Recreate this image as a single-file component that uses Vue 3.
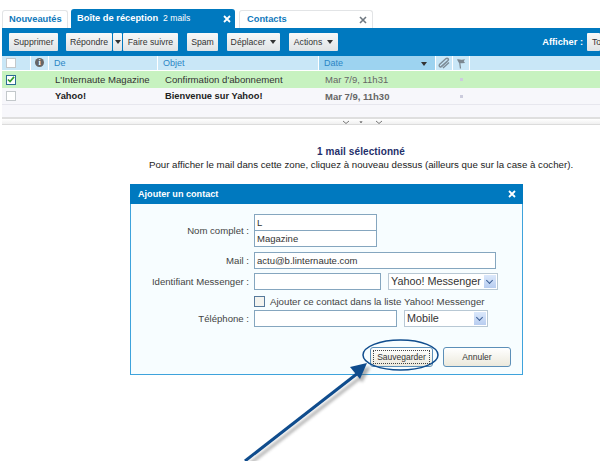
<script setup>
const rows = [
  { from: "L'Internaute Magazine", subject: "Confirmation d'abonnement", date: 'Mar 7/9, 11h31', selected: true },
  { from: 'Yahoo!', subject: 'Bienvenue sur Yahoo!', date: 'Mar 7/9, 11h30', selected: false }
]
</script>

<template>
  <div class="page">
    <nav class="tabs">
      <div class="tab t-news">Nouveautés</div>
      <div class="tab active t-inbox">
        <span class="tab-title">Boîte de réception</span>
        <span class="tab-count">2 mails</span>
        <svg class="tab-x" width="8" height="8" viewBox="0 0 8 8"><path d="M1 1l6 6M7 1l-6 6" stroke="#fff" stroke-width="1.8"/></svg>
      </div>
      <div class="tab t-contacts">
        <span class="tab-title">Contacts</span>
        <svg class="tab-close" width="8" height="8" viewBox="0 0 8 8"><path d="M1 1l6 6M7 1l-6 6" stroke="#6f7880" stroke-width="1.6"/></svg>
      </div>
    </nav>

    <div class="toolbar">
      <button class="btn w-sup">Supprimer</button>
      <div class="split">
        <button class="btn w-rep">Répondre</button>
        <button class="btn w-arrow"><i class="caret"></i></button>
        <button class="btn w-fwd">Faire suivre</button>
      </div>
      <button class="btn w-spam">Spam</button>
      <button class="btn w-dep">Déplacer<i class="caret"></i></button>
      <button class="btn w-act">Actions<i class="caret"></i></button>
      <div class="show">
        <b>Afficher :</b>
        <span class="btn show-btn">To</span>
      </div>
    </div>

    <div class="list-head">
      <div class="h c-check"><span class="box"></span></div>
      <div class="h c-info"><i class="info">i</i></div>
      <div class="h c-from">De</div>
      <div class="h c-subj">Objet</div>
      <div class="h c-date sorted">Date<i class="caret dark"></i></div>
      <div class="h c-clip">
        <svg width="12" height="12" viewBox="0 0 12 12"><path d="M2 10.500L10 3.500C11.200 2 9.500.6 8 1.600L1.500 7.500C.6 9 2 10.600 3.500 9.600L9.500 4.200M5 11l6-5.500" fill="none" stroke="#7d8c97" stroke-width="1.400"/></svg>
      </div>
      <div class="h c-flag">
        <svg width="10" height="11" viewBox="0 0 10 11"><path d="M4.500 10.500L3.500 3" fill="none" stroke="#7b8790" stroke-width="1.200"/><path d="M1 1.500c2-.8 3 .5 5 .2l3-.4-1.200 2L9 5l-3 .3c-1.200.1-2-.4-3-.2z" fill="#7b8790"/></svg>
      </div>
      <div class="h c-rest"></div>
    </div>

    <div v-for="r in rows" :key="r.date" class="row" :class="{ selected: r.selected }">
      <div class="c-check">
        <span class="box" :class="{ on: r.selected }">
          <svg v-if="r.selected" width="8" height="7" viewBox="0 0 9 8"><path d="M1 4l2.400 2.400L8 1" fill="none" stroke="#2e9a2a" stroke-width="1.800"/></svg>
        </span>
      </div>
      <div class="c-info"></div>
      <div class="c-from cell">{{ r.from }}</div>
      <div class="c-subj cell">{{ r.subject }}</div>
      <div class="c-date cell date">{{ r.date }}</div>
      <div class="c-clip"></div>
      <div class="c-flag"><i class="dot"></i></div>
    </div>
    <div class="row-empty"></div>

    <div class="splitter">
      <svg class="grip" width="40" height="5" viewBox="0 0 40 5">
        <path d="M1 1l3 2.500 3-2.500M18 1l1 2 1-2M34 1l3 2.500 3-2.500" fill="none" stroke="#777" stroke-width="1"/>
      </svg>
    </div>

    <section class="selection">
      <h2>1 mail sélectionné</h2>
      <p>Pour afficher le mail dans cette zone, cliquez à nouveau dessus (ailleurs que sur la case à cocher).</p>
    </section>

    <div class="modal">
      <header class="modal-head">
        <span>Ajouter un contact</span>
        <svg width="8" height="8" viewBox="0 0 8 8"><path d="M1 1l6 6M7 1l-6 6" stroke="#fff" stroke-width="1.800"/></svg>
      </header>
      <div class="form">
        <div class="f-row f-name">
          <label>Nom complet :</label>
          <div class="stack">
            <span class="input w123">L</span>
            <span class="input w123 joined">Magazine</span>
          </div>
        </div>
        <div class="f-row">
          <label>Mail :</label>
          <span class="input w242">actu@b.linternaute.com</span>
        </div>
        <div class="f-row">
          <label>Identifiant Messenger :</label>
          <span class="input w127"></span>
          <span class="select w110">Yahoo! Messenger<i class="sel-arrow"></i></span>
        </div>
        <div class="f-row f-check">
          <label></label>
          <span class="check"></span>
          <span class="check-text">Ajouter ce contact dans la liste Yahoo! Messenger</span>
        </div>
        <div class="f-row">
          <label>Téléphone :</label>
          <span class="input w143"></span>
          <span class="select w84">Mobile<i class="sel-arrow"></i></span>
        </div>
      </div>
      <div class="modal-actions">
        <button class="mbtn save"><span>Sauvegarder</span></button>
        <button class="mbtn cancel">Annuler</button>
      </div>
    </div>

    <svg class="annot" width="600" height="461" viewBox="0 0 600 461">
      <defs>
        <filter id="sh" x="-20%" y="-20%" width="140%" height="140%">
          <feGaussianBlur stdDeviation="1.600"/>
        </filter>
      </defs>
      <g opacity=".45" fill="#555" stroke="#555" filter="url(#sh)" transform="translate(3 4)">
        <path d="M245 461L358 373" stroke-width="3" fill="none"/>
        <path d="M367 363L352 367L359 378Z"/>
      </g>
      <ellipse cx="400.500" cy="355" rx="37.500" ry="15" fill="none" stroke="#0f4c8d" stroke-width="1.500"/>
      <path d="M245 461L358 373" stroke="#0f4c8d" stroke-width="3" fill="none"/>
      <path d="M367 363L350 367L360 379Z" fill="#0f4c8d"/>
    </svg>
  </div>
</template>

<style>
html, body { margin: 0; background: #fff; }
</style>

<style scoped>
.page {
  position: relative;
  width: 600px;
  height: 461px;
  overflow: hidden;
  background: #fff;
  font-family: "Liberation Sans", Arial, sans-serif;
  font-size: 9.600px;
  color: #333;
}
.tabs {
  display: flex;
  align-items: flex-end;
  height: 19px;
  padding: 9px 0 0 2px;
}
.tab {
  box-sizing: border-box;
  height: 18px;
  margin-right: 3px;
  border: 1px solid #e2e4e6;
  border-bottom: 0;
  border-radius: 3px 3px 0 0;
  background: #fff;
  color: #1078bb;
  font-weight: bold;
  font-size: 9.300px;
  line-height: 17px;
}
.t-news { width: 66px; padding-left: 6px; }
.t-inbox {
  display: flex;
  align-items: center;
  width: 164px;
  height: 19px;
  padding-left: 6px;
  border: 0;
  background: #0079bf;
  color: #fff;
}
.tab-count { margin-left: 5px; font-weight: normal; font-size: 8.600px; }
.tab-x { margin-left: auto; margin-right: 4px; }
.t-contacts {
  display: flex;
  align-items: center;
  justify-content: space-between;
  width: 134px;
  margin-left: 1px;
  padding: 0 5px 0 7px;
}
.toolbar {
  display: flex;
  align-items: center;
  box-sizing: border-box;
  height: 28px;
  margin-left: 2px;
  padding: 0 0 0 7px;
  background: #0079bf;
}
.btn {
  box-sizing: border-box;
  height: 18px;
  margin: 0;
  padding: 0;
  border: 0;
  border-radius: 1px;
  background: linear-gradient(#f8f9f9, #dfe3e5);
  color: #333;
  font: 8.700px/18px "Liberation Sans", Arial, sans-serif;
  text-align: center;
}
.w-sup { width: 49px; }
.split { display: flex; margin-left: 8px; gap: 1px; }
.w-rep { width: 46px; }
.w-arrow { width: 9px; }
.w-fwd { width: 55px; }
.w-spam { width: 31px; margin-left: 9px; }
.w-dep { width: 53px; margin-left: 9px; }
.w-act { width: 49px; margin-left: 9px; }
.caret {
  display: inline-block;
  width: 0;
  height: 0;
  margin-left: 5px;
  border: 3px solid transparent;
  border-top: 4px solid #333;
  border-bottom: 0;
  vertical-align: 1px;
}
.w-arrow .caret { margin-left: 0; }
.show { display: flex; align-items: center; margin-left: auto; }
.show b { color: #fff; font-size: 9.300px; margin-right: 4px; }
.show-btn { width: 13px; padding-left: 5px; text-align: left; }

.list-head {
  display: flex;
  height: 14px;
  margin-left: 2px;
  color: #2b86c5;
  font-size: 9px;
  line-height: 14px;
}
.h { box-sizing: border-box; background: #c9e7f7; border-right: 1px solid #fff; }
.c-check { width: 29px; flex: none; }
.c-info { width: 18px; flex: none; }
.c-from { width: 109px; flex: none; }
.c-subj { width: 161px; flex: none; }
.c-date { width: 117px; flex: none; }
.c-clip { width: 17px; flex: none; }
.c-flag { width: 17px; flex: none; }
.c-rest { flex: 1; border-right: 0; }
.list-head .c-check { padding: 2px 0 0 4px; }
.list-head .c-from { padding-left: 5px; }
.list-head .c-subj { padding-left: 5px; }
.sorted { background: #9dd3f0; }
.c-date.sorted { position: relative; padding-left: 5px; }
.caret.dark { position: absolute; right: 8px; top: 6px; }
.c-clip.h, .c-flag { display: flex; justify-content: center; align-items: center; }
.box {
  display: flex;
  align-items: center;
  justify-content: center;
  box-sizing: border-box;
  width: 10px;
  height: 10px;
  border: 1px solid #c3c8cb;
  background: #fff;
}
.box.on { border-color: #2b6a94; }
.info {
  display: flex;
  align-items: center;
  justify-content: center;
  width: 9px;
  height: 9px;
  margin: 2px 0 0 4px;
  border-radius: 50%;
  background: #666;
  color: #fff;
  font: bold 8px/9px "Liberation Serif", serif;
}
.row {
  display: flex;
  align-items: center;
  box-sizing: border-box;
  height: 17px;
  margin-left: 2px;
  border-bottom: 1px solid #e7e7ee;
  background: #f7f7fb;
  font-weight: bold;
  font-size: 9.300px;
  color: #222;
}
.row.selected { background: #c7f2c0; font-weight: normal; font-size: 9.600px; color: #333; border-bottom: 0; }
.row .c-check { padding-left: 4px; box-sizing: border-box; }
.list-head + .row { margin-top: 1px; }
.cell { box-sizing: border-box; white-space: nowrap; padding-left: 7px; }
.c-from.cell { padding-left: 6px; }
.date { color: #666; padding-left: 6px; font-size: 9.500px; }
.dot { width: 3px; height: 3px; background: #ccd; }
.row-empty { height: 12px; margin-left: 2px; background: #f7f7fb; }
.splitter {
  height: 5px;
  margin-left: 2px;
  border-top: 2px solid #dfdfdf;
  border-bottom: 1px solid #dcdcdc;
  background: linear-gradient(#fff, #f0f0f0);
  overflow: hidden;
}
.grip { display: block; margin: 1px 0 0 340px; }
.selection { padding: 20px 0 0 122px; text-align: center; }
.selection h2 { margin: 0; color: #1f2f6a; font-size: 10px; line-height: 13px; letter-spacing: .1px; }
.selection p { margin: 0; color: #222; font-size: 9.700px; line-height: 13px; }

.modal {
  position: absolute;
  left: 130px;
  top: 184px;
  box-sizing: border-box;
  width: 393px;
  height: 191px;
  border: 1px solid #3ea3dc;
  background: #f7fdff;
}
.modal-head {
  display: flex;
  align-items: center;
  justify-content: space-between;
  height: 20px;
  padding: 0 7px 0 8px;
  margin: -1px -1px 0;
  background: #0079bf;
  color: #fff;
  font-weight: bold;
  font-size: 9.100px;
}
.form { padding-top: 10px; }
.f-row { display: flex; align-items: center; height: 16px; margin-bottom: 5px; }
.f-row label { flex: none; width: 118px; margin-right: 5px; text-align: right; font-size: 9.600px; color: #444; }
.f-name { height: 33px; }
.stack { display: flex; flex-direction: column; }
.input, .select {
  box-sizing: border-box;
  height: 17px;
  border: 1px solid #85a6bf;
  background: #fff;
  padding-left: 2px;
  color: #333;
  font-size: 9.500px;
  line-height: 15px;
}
.joined { margin-top: -1px; }
.w123 { width: 123px; }
.w242 { width: 242px; }
.w127 { width: 127px; }
.w143 { width: 143px; }
.select { position: relative; margin-left: 7px; border-color: #b8c8d4; font-size: 10.800px; }
.w110 { width: 110px; }
.w84 { width: 84px; }
.sel-arrow {
  position: absolute;
  right: 1px;
  top: 1px;
  width: 12px;
  height: 13px;
  background: linear-gradient(#dbe8fb, #b8cdf0);
}
.sel-arrow::after {
  content: "";
  position: absolute;
  left: 3px;
  top: 3px;
  width: 4px;
  height: 4px;
  border-right: 1.500px solid #3d5f95;
  border-bottom: 1.500px solid #3d5f95;
  transform: rotate(45deg);
}
.f-check { height: 15px; margin-bottom: 1px; }
.check {
  box-sizing: border-box;
  width: 11px;
  height: 11px;
  border: 1px solid #56799b;
  background: #f3f3ef;
}
.check-text { margin-left: 5px; font-size: 9.700px; color: #444; }
.modal-actions {
  display: flex;
  justify-content: flex-end;
  gap: 10px;
  padding: 16px 11px 0 0;
}
.mbtn {
  box-sizing: border-box;
  height: 20px;
  padding: 0;
  border: 1px solid #5c8fb8;
  border-radius: 3px;
  background: linear-gradient(#fff, #ece9dc);
  color: #333;
  font: 8.500px "Liberation Sans", Arial, sans-serif;
}
.save { display: flex; padding: 2px; width: 63px; }
.save span {
  display: block;
  flex: 1;
  border: 1px dotted #444;
  line-height: 13px;
}
.cancel { width: 68px; }
.annot { position: absolute; left: 0; top: 0; pointer-events: none; }
</style>
